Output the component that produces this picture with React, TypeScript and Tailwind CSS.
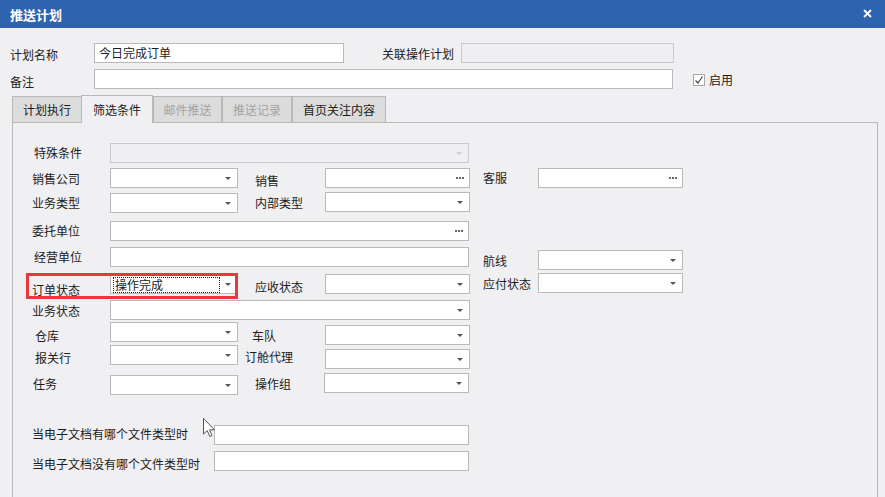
import React from 'react';

type Kind = 'combo' | 'dots' | 'none' | 'disabled' | 'readonly';

function Arrow({ faint = false }: { faint?: boolean }) {
  return (
    <span
      className={
        faint
          ? 'w-0 h-0 border-x-[3px] border-x-transparent border-t-[3px] border-t-[#cfcfcf]'
          : 'w-0 h-0 border-x-[3px] border-x-transparent border-t-[3px] border-t-[#555]'
      }
    />
  );
}

function Dots() {
  return (
    <span className="flex gap-[1px] mr-[-1px]">
      <span className="w-[2px] h-[2px] bg-[#666]" />
      <span className="w-[2px] h-[2px] bg-[#666]" />
      <span className="w-[2px] h-[2px] bg-[#666]" />
    </span>
  );
}

function Field({ c = '', kind = 'none', children }: { c?: string; kind?: Kind; children?: React.ReactNode }) {
  const bg = kind === 'disabled' || kind === 'readonly' ? 'bg-[#efeef1] border-[#c9c9c9]' : 'bg-white border-[#b9b9b9]';
  return (
    <div className={`relative h-[20px] shrink-0 border ${bg} flex items-center justify-end pr-[6px] ${c}`}>
      {children}
      {kind === 'combo' && <Arrow />}
      {kind === 'disabled' && <Arrow faint />}
      {kind === 'dots' && <Dots />}
    </div>
  );
}

function Label({ c = '', children }: { c?: string; children: React.ReactNode }) {
  return <div className={`shrink-0 text-[12px] leading-[16px] whitespace-nowrap text-[#1c1c1c] ${c}`}>{children}</div>;
}

function Tab({ c = '', active = false, disabled = false, children }: { c?: string; active?: boolean; disabled?: boolean; children: React.ReactNode }) {
  const look = active
    ? 'h-[28px] bg-[#f0eff2] -mb-px relative z-10 text-[#1c1c1c]'
    : disabled
      ? 'h-[26px] bg-[#dcdcdc] text-[#a3a3a3]'
      : 'h-[26px] bg-[#dcdcdc] text-[#1c1c1c]';
  return (
    <div className={`shrink-0 border border-b-0 border-[#b9b9b9] flex items-center justify-center text-[12px] ${look} ${c}`}>
      {children}
    </div>
  );
}

export default function App() {
  return (
    <div className="w-[885px] h-[497px] overflow-hidden bg-[#f0eff2] font-['Noto_Sans_CJK_SC',sans-serif] relative">
      {/* title bar */}
      <div className="h-[28px] bg-[#2e63b1] flex items-center justify-between pl-[10px] pr-[13px]">
        <span className="text-white text-[13px] font-bold leading-none">推送计划</span>
        <svg width="9" height="9" viewBox="0 0 9 9" className="mt-[-1px]">
          <path d="M1 1 L8 8 M8 1 L1 8" stroke="white" strokeWidth="1.8" />
        </svg>
      </div>

      {/* header rows */}
      <div className="pt-[15px]">
        <div className="flex items-start h-[20px]">
          <Label c="w-[94px] pl-[10px] mt-[4px]">计划名称</Label>
          <Field c="w-[250px] justify-start pl-[4px]">
            <span className="text-[12px] text-[#1c1c1c] mr-auto">今日完成订单</span>
          </Field>
          <Label c="w-[117px] pl-[38px] mt-[3px]">关联操作计划</Label>
          <Field c="w-[213px]" kind="readonly" />
        </div>
        <div className="flex items-start h-[20px] mt-[6px]">
          <Label c="w-[94px] pl-[10px] mt-[5px]">备注</Label>
          <Field c="w-[579px]" />
          <div className="ml-[20px] mt-[5px] w-[12px] h-[12px] border border-[#a9a9a9] bg-white flex items-center justify-center">
            <svg width="10" height="10" viewBox="0 0 10 10">
              <path d="M1.5 5.5 L4 8 L8.5 1.5" stroke="#444" strokeWidth="1.2" fill="none" />
            </svg>
          </div>
          <Label c="ml-[4px] mt-[3px]">启用</Label>
        </div>
      </div>

      {/* tabs */}
      <div className="mt-[6px] ml-[12px] flex items-end h-[27px]">
        <Tab c="w-[70px]">计划执行</Tab>
        <Tab c="w-[72px] -ml-px" active>筛选条件</Tab>
        <Tab c="w-[69px]" disabled>邮件推送</Tab>
        <Tab c="w-[70px]" disabled>推送记录</Tab>
        <Tab c="w-[94px]">首页关注内容</Tab>
      </div>

      {/* panel */}
      <div className="relative ml-[12px] w-[866px] h-[400px] border border-[#b9b9b9] bg-[#f0eff2] pt-[20px]">
        {/* 特殊条件 */}
        <div className="flex items-start h-[25px]">
          <Label c="w-[97px] pl-[21px] mt-[2px]">特殊条件</Label>
          <Field c="w-[359px]" kind="disabled" />
        </div>
        {/* 销售公司 */}
        <div className="flex items-start h-[24px]">
          <Label c="w-[97px] pl-[19px] mt-[3px]">销售公司</Label>
          <Field c="w-[128px]" kind="combo" />
          <Label c="w-[87px] pl-[17px] mt-[5px]">销售</Label>
          <Field c="w-[145px]" kind="dots" />
          <Label c="w-[68px] pl-[13px] mt-[2px]">客服</Label>
          <Field c="w-[145px]" kind="dots" />
        </div>
        {/* 业务类型 */}
        <div className="flex items-start h-[29px]">
          <Label c="w-[97px] pl-[19px] mt-[3px]">业务类型</Label>
          <Field c="w-[128px] mt-[1px]" kind="combo" />
          <Label c="w-[87px] pl-[17px] mt-[3px]">内部类型</Label>
          <Field c="w-[145px]" kind="combo" />
        </div>
        {/* 委托单位 */}
        <div className="flex items-start h-[26px]">
          <Label c="w-[97px] pl-[19px] mt-[2px]">委托单位</Label>
          <Field c="w-[359px]" kind="dots" />
        </div>
        {/* 经营单位 / 航线 */}
        <div className="flex items-start h-[26px]">
          <Label c="w-[97px] pl-[21px] mt-[2px]">经营单位</Label>
          <Field c="w-[359px]" />
          <Label c="w-[69px] pl-[14px] mt-[6px]">航线</Label>
          <Field c="w-[145px] mt-[3px]" kind="combo" />
        </div>
        {/* 订单状态 */}
        <div className="relative flex items-start h-[27px]">
          <Label c="w-[97px] pl-[19px] mt-[9px]">订单状态</Label>
          <Field c="w-[128px] mt-[1px]" kind="combo">
            <span className="absolute left-[2px] top-[2px] w-[107px] h-[16px] border border-dotted border-[#222] text-[12px] leading-[14px] pl-[1px] text-[#1c1c1c]">
              操作完成
            </span>
          </Field>
          <Label c="w-[87px] pl-[17px] mt-[6px]">应收状态</Label>
          <Field c="w-[145px] mt-[1px]" kind="combo" />
          <Label c="w-[68px] pl-[13px] mt-[3px]">应付状态</Label>
          <Field c="w-[145px]" kind="combo" />
          <div className="absolute left-[13px] top-0 w-[212px] h-[26px] border-[3px] border-[#e8383b]" />
        </div>
        {/* 业务状态 */}
        <div className="flex items-start h-[22px]">
          <Label c="w-[97px] pl-[19px] mt-[3px]">业务状态</Label>
          <Field c="w-[360px]" kind="combo" />
        </div>
        {/* 仓库 / 车队 */}
        <div className="flex items-start h-[23px]">
          <Label c="w-[97px] pl-[22px] mt-[6px]">仓库</Label>
          <Field c="w-[128px]" kind="combo" />
          <Label c="w-[87px] pl-[14px] mt-[6px]">车队</Label>
          <Field c="w-[145px] mt-[3px]" kind="combo" />
        </div>
        {/* 报关行 / 订舱代理 */}
        <div className="flex items-start h-[28px]">
          <Label c="w-[97px] pl-[22px] mt-[5px]">报关行</Label>
          <Field c="w-[128px]" kind="combo" />
          <Label c="w-[87px] pl-[7px] mt-[4px]">订舱代理</Label>
          <Field c="w-[145px] mt-[4px]" kind="combo" />
        </div>
        {/* 任务 / 操作组 */}
        <div className="flex items-start h-[52px]">
          <Label c="w-[97px] pl-[20px] mt-[3px]">任务</Label>
          <Field c="w-[128px] mt-[2px]" kind="combo" />
          <Label c="w-[86px] pl-[17px] mt-[3px]">操作组</Label>
          <Field c="w-[145px]" kind="combo" />
        </div>
        {/* 文件类型 */}
        <div className="flex items-start h-[26px]">
          <Label c="w-[201px] pl-[19px] mt-[1px]">当电子文档有哪个文件类型时</Label>
          <Field c="w-[255px]" />
        </div>
        <div className="flex items-start h-[26px]">
          <Label c="w-[201px] pl-[19px] mt-[5px]">当电子文档没有哪个文件类型时</Label>
          <Field c="w-[255px]" />
        </div>
      </div>

      {/* mouse pointer */}
      <svg className="absolute left-[203px] top-[418px]" width="13" height="20" viewBox="0 0 13 20">
        <path d="M0.5 0.5 L0.5 16 L4.2 12.6 L6.8 18.5 L9 17.5 L6.5 11.8 L11.5 11.8 Z" fill="white" stroke="#555" strokeWidth="1" strokeLinejoin="round" />
      </svg>
    </div>
  );
}
